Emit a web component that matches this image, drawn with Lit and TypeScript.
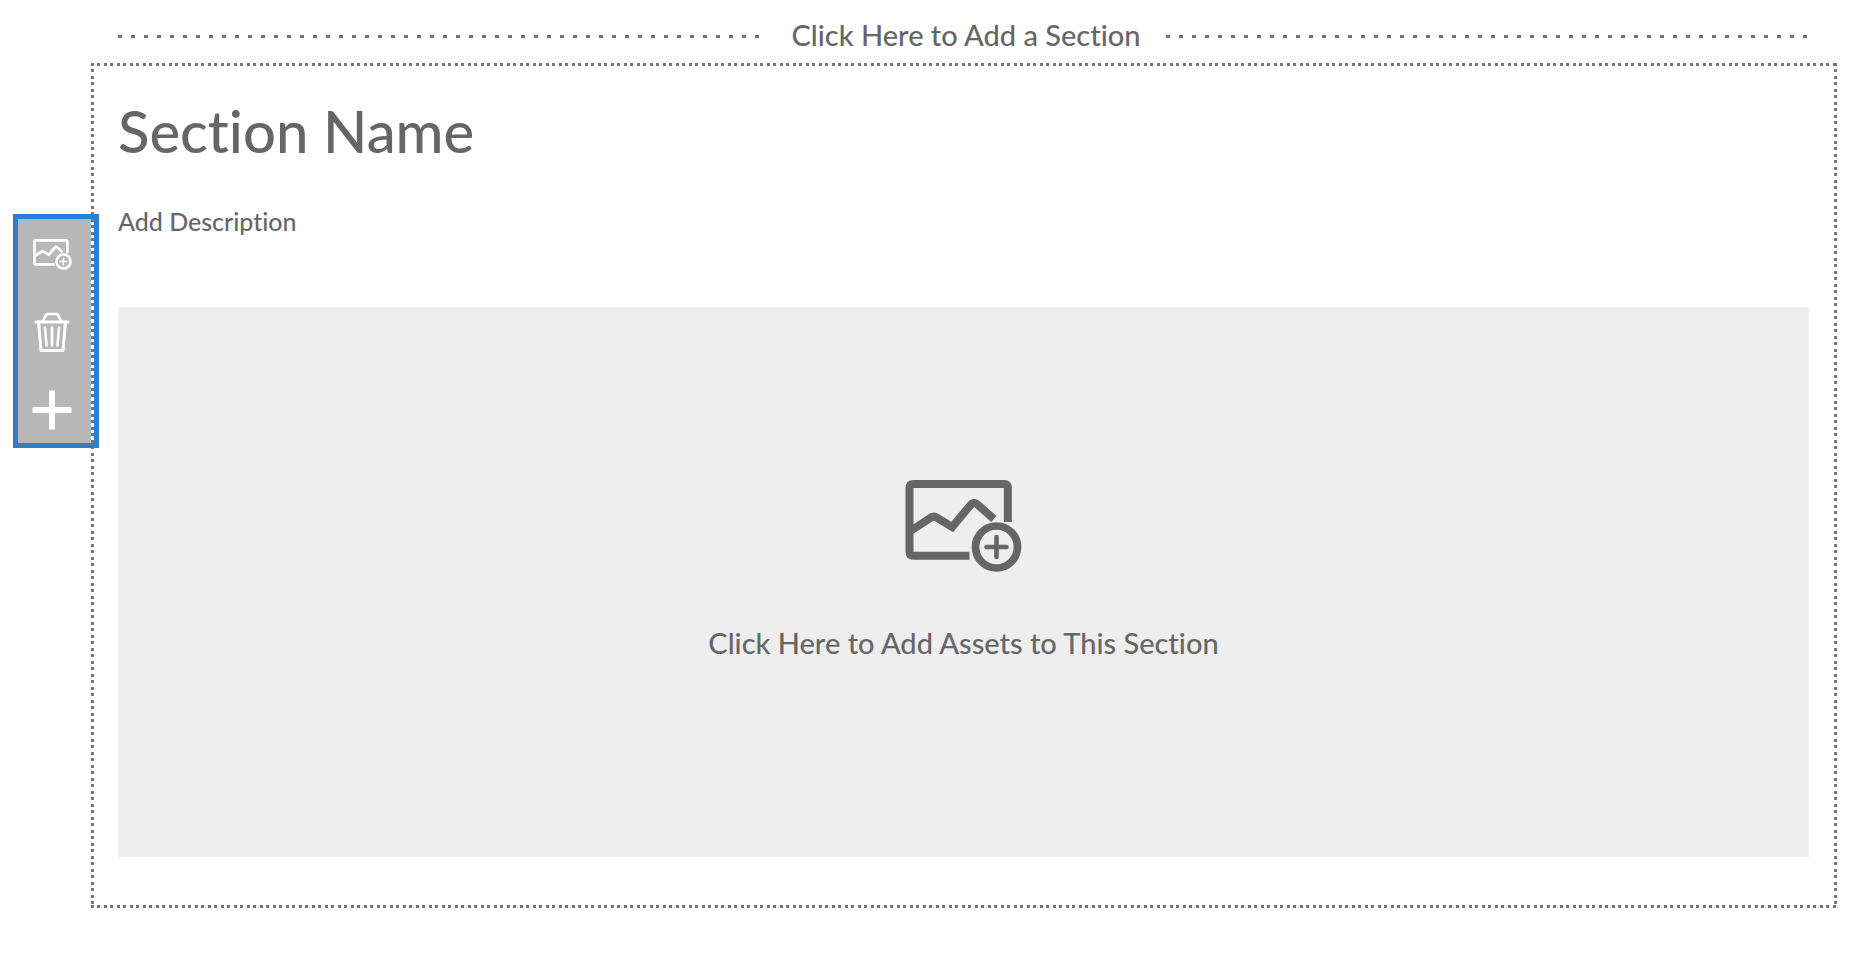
import { LitElement, html, css, svg } from "lit";
import { customElement } from "lit/decorators.js";

const pictureAdd = (cls: string) => svg`
  <svg class=${cls} viewBox="76 58 350 276" fill="none" stroke="currentColor" aria-hidden="true">
    <path d="M384 184V82q0-12-12-12H101q-12 0-12 12v191q0 12 12 12H269" stroke-width="24" />
    <path d="M92 211L153 171Q162 165 171 171L217 199L273 132Q282 122 292 131L342 175" stroke-width="24" />
    <circle cx="350" cy="259" r="63" stroke-width="23" />
    <path d="M350 229v60M320 259h60" stroke-width="14" stroke-linecap="round" />
  </svg>`;

const trash = svg`
  <svg class="glyph" viewBox="0 0 40 40" fill="none" stroke="currentColor" stroke-linejoin="round" stroke-linecap="round" aria-hidden="true">
    <path d="M4 10H36" stroke-width="3" />
    <path d="M11 9L14 3Q15 2 16 2H24Q25 2 26 3L29 9" stroke-width="2.6" />
    <path d="M6.5 10L9 38.5H31L33.5 10" stroke-width="3" />
    <path d="M13 15.5L14.500 33.500M20 15.500V33.500M27 15.500L25.500 33.500" stroke-width="2.6" />
  </svg>`;

const plus = svg`
  <svg class="glyph" viewBox="0 0 40 40" fill="none" stroke="currentColor" stroke-width="6" aria-hidden="true">
    <path d="M20 0.500V39.500M0.500 20H39.500" />
  </svg>`;

@customElement("section-toolbar")
export class SectionToolbar extends LitElement {
  static styles = css`
    :host {
      display: block;
      box-sizing: border-box;
      border: 5px solid #2b80d0;
    }
    .tools {
      display: flex;
      flex-direction: column;
      gap: 38px;
      padding: 15px 5px 13px 0;
      margin-right: 3px;
      background: #b7b7b7;
    }
    .tool {
      display: flex;
      align-items: center;
      justify-content: center;
      width: 68px;
      height: 40px;
      padding: 0;
      border: 0;
      background: none;
      color: #fff;
      cursor: pointer;
    }
    .glyph {
      width: 40px;
      height: 40px;
    }
    .picture {
      width: 39px;
      height: 31px;
    }
  `;

  render() {
    return html`
      <div class="tools" role="toolbar" aria-label="Section tools">
        <button class="tool" aria-label="Add assets">${pictureAdd("picture")}</button>
        <button class="tool" aria-label="Delete section">${trash}</button>
        <button class="tool" aria-label="Add section">${plus}</button>
      </div>
    `;
  }
}

@customElement("app-root")
export class AppRoot extends LitElement {
  static styles = css`
    :host {
      display: block;
      box-sizing: border-box;
      min-height: 100vh;
      padding: 16px 16px 51px 91px;
      background: #fff;
      color: #666;
      font-family: Lato, "Open Sans", sans-serif;
      font-weight: 500;
      font-variant-ligatures: none;
    }
    button {
      font: inherit;
      font-variant-ligatures: none;
      color: inherit;
      border: 0;
      background: none;
      cursor: pointer;
    }
    .adder {
      display: flex;
      align-items: center;
      gap: 26px;
      width: 100%;
      padding: 0 23px 2px 27px;
      font-size: 29px;
      line-height: 38px;
    }
    .leader {
      flex: 1;
      height: 3px;
      margin-top: 3px;
      background: repeating-linear-gradient(90deg, #6f6f6f 0 4px, transparent 4px 13px);
    }
    .section {
      --dots-x: linear-gradient(90deg, #777 3px, transparent 3px 6px, #777 6px 9px, transparent 9px);
      --dots-y: linear-gradient(#777 3px, transparent 3px 6px, #777 6px 9px, transparent 9px);
      position: relative;
      margin-top: 7px;
      padding: 34px 28px 51px 27px;
      background:
        var(--dots-x) 0 0 / 13px 3px repeat-x,
        var(--dots-x) 0 100% / 13px 3px repeat-x,
        var(--dots-y) 0 0 / 3px 13px repeat-y,
        var(--dots-y) 100% 0 / 3px 13px repeat-y;
    }
    .toolbar {
      position: absolute;
      left: -78px;
      top: 151px;
    }
    .title {
      margin: 0;
      font-size: 58px;
      line-height: 68px;
      font-weight: 500;
    }
    .description {
      display: block;
      margin-top: 40px;
      padding: 0;
      font-size: 25px;
      line-height: 32px;
    }
    .assets {
      display: flex;
      flex-direction: column;
      align-items: center;
      gap: 52px;
      width: 100%;
      margin-top: 70px;
      padding: 173px 0 195px;
      background: #eee;
      font-size: 29px;
      line-height: 38px;
    }
    .picture {
      width: 117px;
      height: 92px;
    }
  `;

  render() {
    return html`
      <button class="adder">
        <span class="leader"></span>
        <span>Click Here to Add a Section</span>
        <span class="leader"></span>
      </button>
      <section class="section">
        <section-toolbar class="toolbar"></section-toolbar>
        <h1 class="title">Section Name</h1>
        <button class="description">Add Description</button>
        <button class="assets">
          ${pictureAdd("picture")}
          <span>Click Here to Add Assets to This Section</span>
        </button>
      </section>
    `;
  }
}
